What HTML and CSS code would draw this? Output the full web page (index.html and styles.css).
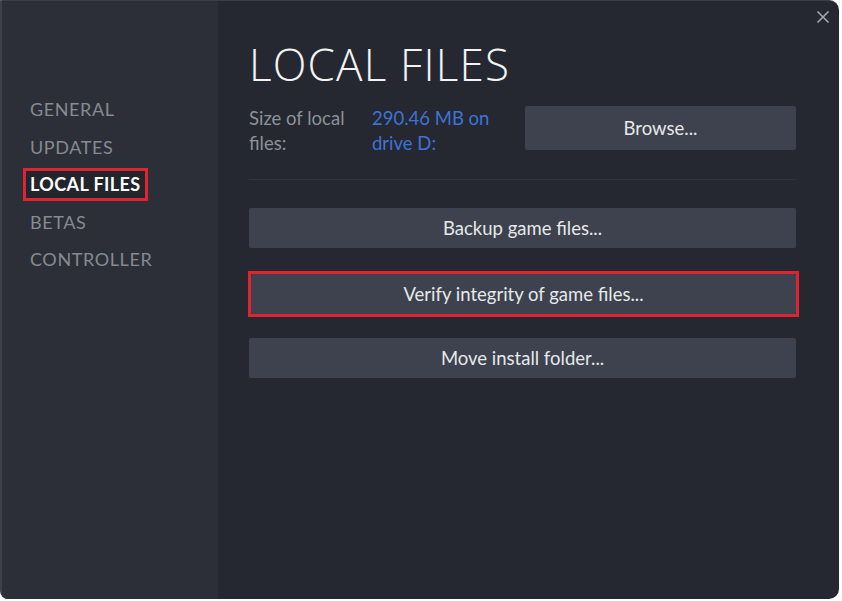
FILE: index.html
```html
<!DOCTYPE html>
<html lang="en">
<head>
<meta charset="utf-8">
<title>Local Files</title>
<link rel="stylesheet" href="styles.css">
</head>
<body>
<div class="window">
  <aside class="sidebar">
    <ul class="nav">
      <li class="nav-item">GENERAL</li>
      <li class="nav-item">UPDATES</li>
      <li class="nav-item active"><span class="highlight">LOCAL FILES</span></li>
      <li class="nav-item">BETAS</li>
      <li class="nav-item">CONTROLLER</li>
    </ul>
  </aside>
  <main class="content">
    <h1 class="title">LOCAL FILES</h1>
    <div class="info-row">
      <div class="info-label">Size of local files:</div>
      <div class="info-value">290.46 MB on drive D:</div>
      <button class="btn btn-browse">Browse...</button>
    </div>
    <div class="separator"></div>
    <div class="actions">
      <button class="btn">Backup game files...</button>
      <div class="highlight-box"><button class="btn">Verify integrity of game files...</button></div>
      <button class="btn btn-move">Move install folder...</button>
    </div>
  </main>
  <button class="close" aria-label="Close">
    <svg width="14" height="14" viewBox="0 0 14 14"><path d="M1.5 1.5 L12.5 12.5 M12.5 1.5 L1.5 12.5" stroke="#a3a8b0" stroke-width="1.6" fill="none"/></svg>
  </button>
</div>
</body>
</html>
```

FILE: styles.css
```css
* { box-sizing: border-box; }
html, body { margin: 0; padding: 0; }
body {
  background: #ffffff;
  font-family: "Lato", "Noto Sans", sans-serif;
  width: 842px;
  height: 601px;
  overflow: hidden;
}
.window {
  position: relative;
  display: flex;
  width: 839px;
  height: 599px;
  background: #252830;
  border-top: 1px solid #3a3e48;
  border-left: 2px solid #3c404a;
  border-radius: 0 10px 10px 8px;
  overflow: hidden;
}
.sidebar {
  width: 216px;
  flex: none;
  background: #2c2f38;
  padding-top: 90px;
}
.nav {
  list-style: none;
  margin: 0;
  padding: 0 0 0 28px;
}
.nav-item {
  height: 37.5px;
  line-height: 37.5px;
  font-size: 18px;
  color: #858a93;
  letter-spacing: 0.6px;
}
.nav-item.active { color: #ffffff; font-weight: 700; letter-spacing: 0.4px; }
.highlight {
  display: inline-block;
  margin-left: -7px;
  padding: 0 4px;
  height: 33px;
  line-height: 27px;
  border: 3px solid #e0232f;
  background: #22252c;
}
.content {
  flex: 1;
  padding: 33px 43px 0 31px;
}
.title {
  margin: 0;
  font-family: "Open Sans", "Lato", sans-serif;
  font-weight: 300;
  font-size: 44px;
  line-height: 60px;
  letter-spacing: 1.2px;
  color: #f2f3f4;
}
.info-row {
  display: flex;
  align-items: flex-start;
  margin-top: 12px;
}
.info-label {
  width: 123px;
  font-size: 18.5px;
  line-height: 25px;
  color: #8c919a;
}
.info-value {
  width: 153px;
  font-size: 18.5px;
  line-height: 25px;
  color: #3f72d6;
}
.btn {
  display: block;
  width: 100%;
  height: 40px;
  border: none;
  border-radius: 2px;
  background: #3d424e;
  color: #e6e8ea;
  font-family: "Lato", "Noto Sans", sans-serif;
  font-size: 18.5px;
  padding: 0;
}
.btn-browse {
  flex: 1;
  width: auto;
  height: 44px;
}
.separator {
  height: 1px;
  background: #2f333c;
  margin-top: 23px;
}
.actions {
  margin-top: 28px;
  display: flex;
  flex-direction: column;
}
.actions .btn { height: 40px; }
.highlight-box {
  margin: 23px -3px 0 -1px;
  border: 3px solid #e0232f;
  padding: 0;
}
.highlight-box .btn { height: 40px; }
.btn-move { margin-top: 21px; }
.close {
  position: absolute;
  top: 9px;
  right: 8px;
  width: 16px;
  height: 16px;
  padding: 0;
  border: none;
  background: transparent;
}
```
